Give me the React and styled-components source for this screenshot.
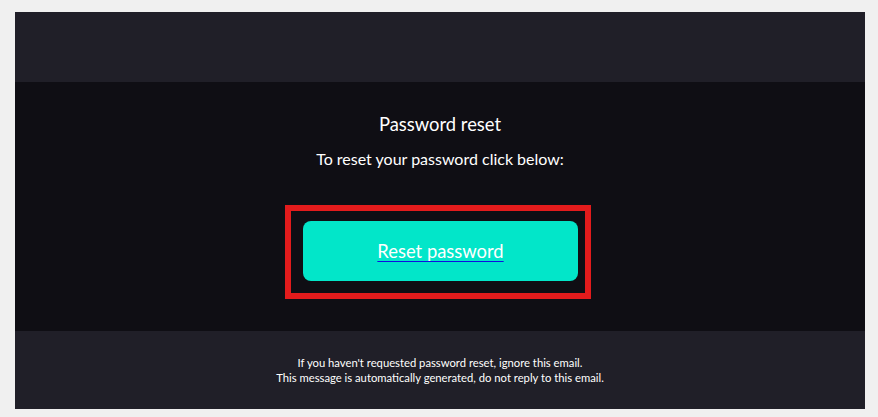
import React from 'react';
import styled, {createGlobalStyle} from 'styled-components';

const Global = createGlobalStyle`
  body {
    margin: 0;
    background: #f0f0f0;
    font-family: Lato, "Open Sans", sans-serif;
  }
`;

const Page = styled.div`
  padding: 12px 15px 8px;
`;

const Card = styled.div`
  width: 850px;
  display: flex;
  flex-flow: column nowrap;
`;

const Header = styled.div`
  height: 70px;
  background: #201f28;
`;

const Body = styled.div`
  height: 249px;
  box-sizing: border-box;
  background: #0f0e14;
  padding-top: 30px;
  display: flex;
  flex-flow: column nowrap;
  align-items: center;
  color: #ffffff;
`;

const Title = styled.h1`
  margin: 0;
  font-size: 18.4px;
  font-weight: 400;
  line-height: 24px;
`;

const Lead = styled.p`
  margin: 11px 0 34px;
  font-size: 16px;
  line-height: 24px;
`;

const Highlight = styled.div`
  width: 306px;
  height: 94px;
  margin-right: 4px;
  box-sizing: border-box;
  border: 6px solid #e31b1c;
  display: flex;
  align-items: center;
  justify-content: center;
`;

const Button = styled.a`
  width: 275px;
  height: 60px;
  margin: 0 0 2px 5px;
  border-radius: 8px;
  background: #02e6c9;
  display: flex;
  align-items: center;
  justify-content: center;
  color: #ffffff;
  text-decoration: underline #1010e0;
  text-underline-offset: 3px;
  font-size: 18.4px;
`;

const Footer = styled.div`
  height: 78px;
  box-sizing: border-box;
  padding-top: 24px;
  background: #201f28;
  color: #ffffff;
  text-align: center;
  font-size: 11.25px;
  line-height: 15px;
  p {
    margin: 0;
  }
`;

export default () => (
  <Page>
    <Global />
    <Card>
      <Header />
      <Body>
        <Title>Password reset</Title>
        <Lead>To reset your password click below:</Lead>
        <Highlight>
          <Button href='#'>Reset password</Button>
        </Highlight>
      </Body>
      <Footer>
        <p>If you haven't requested password reset, ignore this email.</p>
        <p>This message is automatically generated, do not reply to this email.</p>
      </Footer>
    </Card>
  </Page>
);
